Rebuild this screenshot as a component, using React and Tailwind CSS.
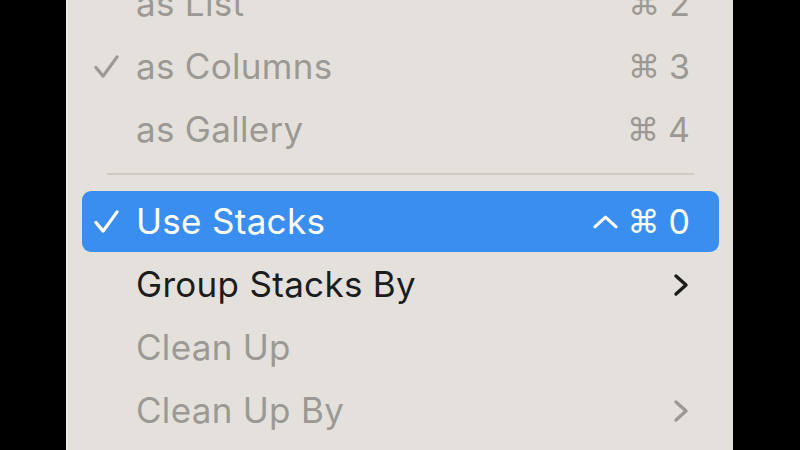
const font = { fontFamily: 'Inter, "DejaVu Sans", sans-serif' };

function Check({ className }) {
  return (
    <svg viewBox="0 0 28 26" className={className} fill="none" stroke="currentColor" strokeWidth="3.4" strokeLinecap="round" strokeLinejoin="round">
      <path d="M3 14 L10.5 23 L25 3" />
    </svg>
  );
}

function Chevron({ className }) {
  return (
    <svg viewBox="0 0 18 24" className={className} fill="none" stroke="currentColor" strokeWidth="3.4" strokeLinecap="round" strokeLinejoin="round">
      <path d="M4 3 L14 12 L4 21" />
    </svg>
  );
}

function Caret() {
  return (
    <svg viewBox="0 0 28 14" className="w-[27px] h-[14px]" fill="none" stroke="currentColor" strokeWidth="3.2" strokeLinecap="round" strokeLinejoin="round">
      <path d="M3 12 L14 2 L25 12" />
    </svg>
  );
}

function Row({ label, checked, shortcut, ctrl, submenu, disabled, active }) {
  const color = active ? 'text-white' : disabled ? 'text-[#9c9994]' : 'text-[#1c1c1c]';
  return (
    <div className="h-[63px] py-[1px] px-[14px]">
      <div className={`h-[61px] flex items-center pl-[11px] pr-[29px] rounded-[9px] ${active ? 'bg-[#3a8ef0]' : ''} ${color}`}>
        <div className="w-[43px] shrink-0">
          {checked && <Check className="w-[27px] h-[25px]" />}
        </div>
        <span className="text-[35px] leading-none tracking-[0.3px] flex-1">{label}</span>
        {shortcut && (
          <span className="flex items-center gap-[9px] text-[34px] leading-none">
            {ctrl && <Caret />}
            <span className="text-[32px]" style={{ fontFamily: '"DejaVu Sans", sans-serif' }}>⌘</span>
            <span>{shortcut}</span>
          </span>
        )}
        {submenu && <Chevron className="w-[18px] h-[24px]" />}
      </div>
    </div>
  );
}

export default function App() {
  return (
    <div className="w-[800px] h-[450px] bg-black overflow-hidden flex" style={font}>
      <div className="ml-[66px] w-[667px] h-full bg-[#e4e1dc] border-l-2 border-[#ecebe8] flex flex-col">
        <div className="-mt-[28px]">
          <Row label="as List" shortcut="2" disabled />
          <Row label="as Columns" shortcut="3" checked disabled />
          <Row label="as Gallery" shortcut="4" disabled />
        </div>
        <div className="h-[29px] flex items-center px-[39px] pb-[3px]">
          <div className="w-full h-[2px] bg-[#cfcac2]" />
        </div>
        <Row label="Use Stacks" shortcut="0" ctrl checked active />
        <Row label="Group Stacks By" submenu />
        <Row label="Clean Up" disabled />
        <Row label="Clean Up By" submenu disabled />
      </div>
    </div>
  );
}
